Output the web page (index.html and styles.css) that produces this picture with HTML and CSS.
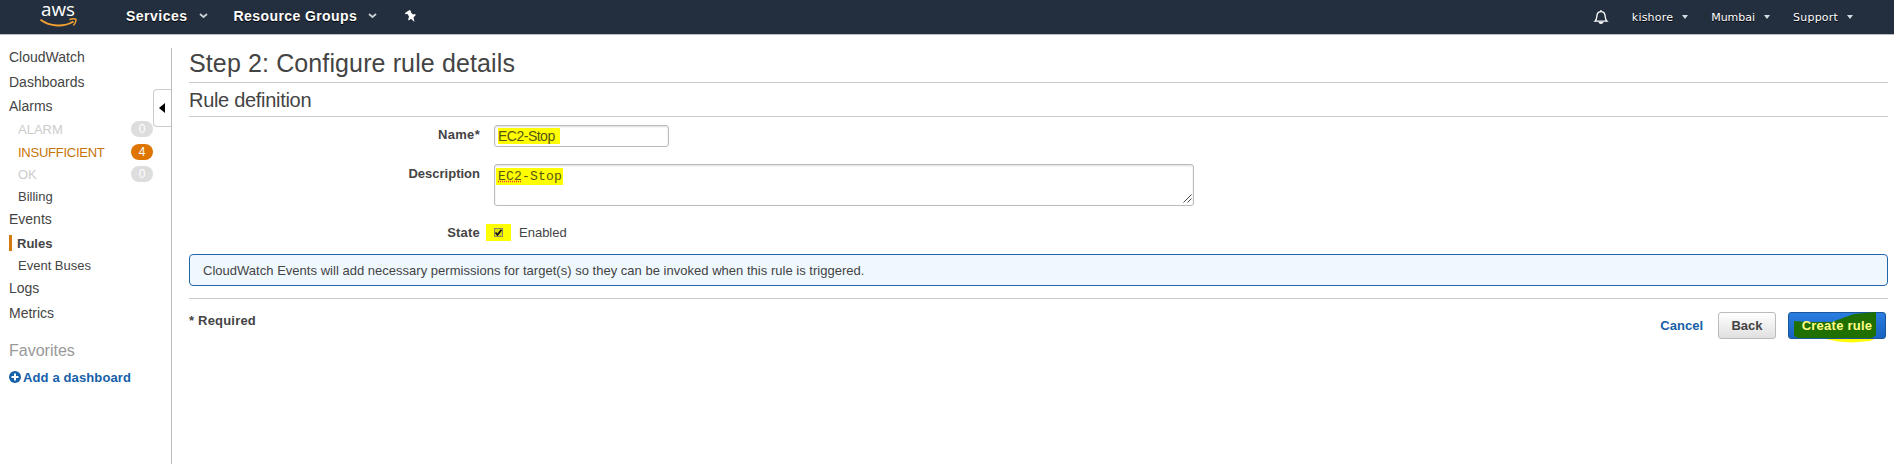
FILE: index.html
```html
<!DOCTYPE html>
<html lang="en">
<head>
<meta charset="utf-8">
<title>CloudWatch Management Console</title>
<link rel="stylesheet" href="styles.css">
</head>
<body>
<header class="nav">
  <svg class="logo" width="38" height="32" viewBox="0 0 38 32"><text class="logo-text" x="1" y="16" textLength="34" lengthAdjust="spacingAndGlyphs">aws</text><path class="smile" d="M.5 19.800C10 26.800 24 27.300 33.500 21.500"/><path class="smile-tip" d="M29.500 19.700C32 18.500 35.500 18.500 36 19.300C36.400 20.500 35 24 33.300 25.300"/></svg>
  <a class="nav-main services"><span>Services</span><svg width="9" height="6" viewBox="0 0 9 6"><path class="chev" d="M1 1l3.500 3L8 1"/></svg></a>
  <a class="nav-main groups"><span>Resource Groups</span><svg width="9" height="6" viewBox="0 0 9 6"><path class="chev" d="M1 1l3.500 3L8 1"/></svg></a>
  <svg class="pin" width="11" height="12" viewBox="0 0 11 12"><path d="M4.500 0L6 1l-.3 1.300L8 4.500 10 4l.8 1-2.300 2.600L9.500 12 6 8.800 3.800 10.600 3.200 9.500 4 6.500 2.500 4 .5 4.200 0 3z"/></svg>
  <span class="spacer"></span>
  <svg class="bell" width="16" height="16" viewBox="0 0 16 16"><path class="bell-body" d="M8 1v1.500M2 12.200c1.800-1.600 1.600-3 2-6C4.400 3.800 6 2.600 8 2.600s3.600 1.200 4 3.600c.4 3 .2 4.400 2 6z"/><path class="bell-clap" d="M5.500 13h5c-.5 2.600-4.500 2.600-5 0z"/></svg>
  <a class="nav-sub user"><span>kishore</span><i class="caret"></i></a>
  <a class="nav-sub region"><span>Mumbai</span><i class="caret"></i></a>
  <a class="nav-sub support"><span>Support</span><i class="caret"></i></a>
</header>
<div class="body">
  <aside class="side">
    <a class="row cw"><span>CloudWatch</span></a>
    <a class="row dash"><span>Dashboards</span></a>
    <a class="row alarms"><span>Alarms</span></a>
    <a class="row sub off alarm"><span>ALARM</span><b class="badge">0</b></a>
    <a class="row sub warn insuf"><span>INSUFFICIENT</span><b class="badge">4</b></a>
    <a class="row sub off ok"><span>OK</span><b class="badge">0</b></a>
    <a class="row sub billing"><span>Billing</span></a>
    <a class="row events"><span>Events</span></a>
    <a class="row current"><span>Rules</span></a>
    <a class="row sub buses"><span>Event Buses</span></a>
    <a class="row logs"><span>Logs</span></a>
    <a class="row metrics"><span>Metrics</span></a>
    <div class="row fav"><span>Favorites</span></div>
    <a class="row add"><svg width="12" height="12" viewBox="0 0 12 12"><circle cx="6" cy="6" r="6"/><path d="M6 2.500v7M2.500 6h7"/></svg><span>Add a dashboard</span></a>
    <div class="toggle"><i></i></div>
  </aside>
  <main class="main">
    <h1><span>Step 2: Configure rule details</span></h1>
    <h2><span>Rule definition</span></h2>
    <div class="field name"><label><span>Name*</span></label><div class="input"><mark class="mark-name">EC2-Stop</mark></div></div>
    <div class="field desc"><label><span>Description</span></label><div class="area"><mark class="mark-desc"><u>EC2</u>-Stop</mark><svg class="grip" width="9" height="9" viewBox="0 0 9 9"><path d="M.5 8.500l8-8M4.500 8.500l4-4"/></svg></div></div>
    <div class="field state"><label><span>State</span></label><div class="check"><i class="tick"><svg width="9" height="9" viewBox="0 0 9 9"><path d="M1.500 4.500l2 2.300 4-5"/></svg></i></div><span class="enabled">Enabled</span></div>
    <div class="info"><span>CloudWatch Events will add necessary permissions for target(s) so they can be invoked when this rule is triggered.</span></div>
    <footer class="foot">
      <div class="required"><span>* Required</span></div>
      <a class="cancel"><span>Cancel</span></a>
      <div class="btn back"><span>Back</span></div>
      <div class="btn create"><svg class="scribble" width="98" height="32" viewBox="0 0 98 32"><path class="ink" d="M6 9L20 10 44 10 66 2 88 0V23L84 26H10L6 24z"/><path class="over" d="M38 27H86L82 29 64 30.500 50 29.500z"/></svg><span>Create rule</span></div>
    </footer>
  </main>
</div>
</body>
</html>
```
FILE: styles.css
```css
* { box-sizing: border-box; }
body { margin: 0; height: 464px; overflow: hidden; background: #fff; color: #444; font: 13px "Liberation Sans", Arial, sans-serif; }
span, mark { white-space: nowrap; }
.nav { display: flex; align-items: flex-start; height: 34px; background: #232f3e; color: #fff; box-shadow: 0 1px 0 #b9bec6; }
.logo { margin: 0 0 0 40px; overflow: visible; }
.logo-text { fill: #fff; font: 18px "Open Sans", sans-serif; }
.smile { fill: none; stroke: #f0a030; stroke-width: 2; }
.smile-tip { fill: none; stroke: #f0a030; stroke-width: 1.500; }
.nav-main { display: flex; align-items: center; gap: 11px; height: 32px; font-weight: bold; font-size: 14px; text-shadow: 0 1px 0 #000; }
.services { margin-left: 48px; letter-spacing: .5px; }
.groups { margin-left: 26px; letter-spacing: .4px; }
.chev { fill: none; stroke: #ccd1d8; stroke-width: 1.800; }
.pin { margin: 10px 0 0 28px; fill: #fff; }
.spacer { flex: 1; }
.bell { margin: 9px 23px 0 0; }
.bell-body { fill: none; stroke: #fff; stroke-width: 1.300; }
.bell-clap { fill: #fff; }
.nav-sub { display: flex; align-items: center; height: 34px; gap: 9px; font: 11px "DejaVu Sans", sans-serif; text-shadow: 0 1px 0 #000; }
.user { margin-right: 23px; letter-spacing: .2px; }
.region { margin-right: 23px; }
.support { margin-right: 41px; letter-spacing: .2px; }
.caret { border: 3.500px solid transparent; border-top: 4px solid #d5dbe2; border-bottom: 0; }
.body { display: flex; height: 430px; }
.side { position: relative; width: 172px; margin-top: 14px; padding: 0 18px 0 9px; border-right: 1px solid #bbb; }
.row { display: flex; align-items: center; height: 20px; font-size: 14px; }
.cw { margin-top: -1px; }
.dash { margin-top: 5px; }
.alarms { margin-top: 4px; }
.sub { padding-left: 9px; font-size: 13px; margin-top: 3px; }
.off { color: #ccc; }
.warn { color: #c77405; }
.insuf { letter-spacing: -.25px; }
.ok { margin-top: 2px; }
.billing { margin-top: 2px; }
.badge { margin-left: auto; width: 22px; height: 16px; border-radius: 8px; background: #ddd; color: #fff; font-size: 12px; font-weight: normal; line-height: 16px; text-align: center; }
.warn .badge { background: #dd7500; }
.events { margin-top: 3px; }
.current { margin-top: 4px; font-weight: bold; font-size: 13px; }
.current::before { content: ""; width: 3px; height: 16px; margin-right: 5px; background: #d37a10; }
.buses { margin-top: 2px; }
.logs { margin-top: 3px; }
.metrics { margin-top: 5px; }
.fav { margin-top: 18px; font-size: 16px; color: #999; }
.add { margin-top: 6px; gap: 2px; font-size: 13px; font-weight: bold; color: #1660a8; letter-spacing: .13px; }
.add svg { fill: #1660a8; stroke: #fff; stroke-width: 2; }
.add circle { stroke: none; }
.toggle { position: absolute; right: 0; top: 41px; width: 18px; height: 38px; border: 1px solid #ccc; border-right: 0; border-radius: 4px 0 0 4px; background: #fff; }
.toggle i { display: block; margin: 13px 0 0 5px; width: 0; border: 5px solid transparent; border-right: 6px solid #000; border-left: 0; }
.main { width: 1699px; margin-left: 17px; }
h1 { margin: 14px 0 0; height: 35px; border-bottom: 1px solid #ccc; font-size: 25px; font-weight: normal; line-height: 30px; letter-spacing: .12px; }
h2 { margin: 0; height: 34px; border-bottom: 1px solid #ccc; font-size: 20px; font-weight: normal; line-height: 34px; letter-spacing: -.3px; }
.field { display: flex; align-items: flex-start; }
label { width: 291px; margin-right: 14px; text-align: right; font-weight: bold; line-height: 20px; }
.name { margin-top: 8px; }
.name label { letter-spacing: .3px; }
.input { width: 175px; height: 22px; border: 1px solid #bbb; border-radius: 3px; box-shadow: inset 0 1px 2px #ddd; padding: 2px 0 0 3px; }
mark { display: block; background: #ff0; color: #55551a; }
.mark-name { width: 62px; height: 16px; line-height: 17px; font-size: 14px; letter-spacing: -.5px; }
.desc { margin-top: 17px; }
.area { position: relative; width: 700px; height: 42px; border: 1px solid #bbb; border-radius: 3px; box-shadow: inset 0 1px 2px #ddd; padding: 3px 0 0 1px; }
.mark-desc { width: 67px; height: 17px; padding-left: 2px; font: 13px/18px "Liberation Mono", monospace; letter-spacing: .2px; }
u { text-decoration: underline dotted #e33; }
.grip { position: absolute; right: 1px; bottom: 2px; stroke: #444; fill: none; }
.state { margin-top: 17px; }
.state label { letter-spacing: .2px; }
.check { width: 25px; height: 17px; margin: 1px 8px 0 -8px; padding: 4px 0 0 8px; background: #ff0; }
.tick { display: block; width: 9px; height: 9px; border: 1px solid #886; background: #dd0; }
.tick svg { display: block; margin: -1px; fill: none; stroke: #111; stroke-width: 1.800; }
.enabled { line-height: 20px; }
.info { height: 32px; margin-top: 11px; padding-left: 13px; border: 1px solid #2266aa; border-radius: 4px; background: #f0f8ff; line-height: 32px; letter-spacing: .02px; }
.foot { display: flex; margin-top: 12px; height: 42px; border-top: 1px solid #ccc; font-weight: bold; }
.required { flex: 1; line-height: 44px; letter-spacing: .2px; }
.cancel { margin-right: 15px; line-height: 54px; color: #1660a8; }
.btn { position: relative; height: 27px; margin-top: 13px; border: 1px solid #bbb; border-radius: 3px; line-height: 26px; text-align: center; }
.back { width: 58px; margin-right: 12px; background: linear-gradient(#fff, #e0e0e0); }
.create { width: 98px; margin-right: 2px; border-color: #1a5699; background: linear-gradient(#2a7de0, #1763c0); color: #ff8; letter-spacing: .25px; }
.create span { position: relative; }
.scribble { position: absolute; left: -1px; top: -1px; }
.ink { fill: #1f7000; }
.over { fill: #ff0; }
```
